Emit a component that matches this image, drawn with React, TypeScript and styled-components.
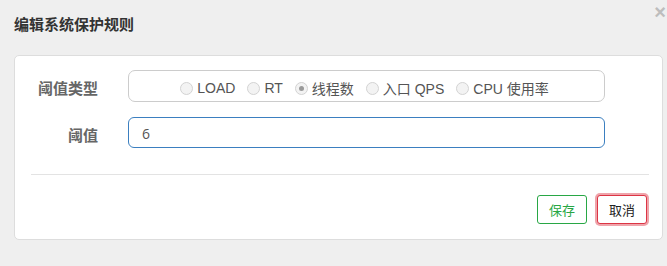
import styled, { createGlobalStyle } from "styled-components";

const GlobalStyle = createGlobalStyle`
  html, body {
    margin: 0;
    padding: 0;
    background: #efefef;
    font-family: "Liberation Sans", Arial, "Noto Sans CJK SC", sans-serif;
  }
  * { box-sizing: border-box; }
`;

const Modal = styled.div`
  position: relative;
  width: 667px;
  height: 266px;
  overflow: hidden;
  background: #efefef;
`;

const Header = styled.div`
  height: 55px;
  display: flex;
  align-items: center;
  padding: 0 0 8px 14px;
`;

const Title = styled.h3`
  margin: 0;
  font-size: 15px;
  font-weight: bold;
  color: #333;
  font-family: "Noto Sans CJK SC", sans-serif;
`;

const Close = styled.span`
  position: absolute;
  top: 1px;
  right: 1px;
  font-size: 20px;
  font-weight: bold;
  color: #bdbdbd;
  font-family: "Liberation Sans", sans-serif;
`;

const Card = styled.div`
  margin-left: 14px;
  width: 649px;
  background: #fff;
  border: 1px solid #ddd;
  border-radius: 5px;
  padding: 14px 15px 15px 15px;
`;

const Row = styled.div<{ $gap?: number }>`
  display: grid;
  grid-template-columns: 68px 477px;
  column-gap: 30px;
  align-items: center;
  margin-top: ${(p) => p.$gap ?? 0}px;
`;

const Label = styled.label`
  text-align: right;
  padding-top: 3px;
  font-size: 15px;
  font-weight: bold;
  color: #666;
  font-family: "Noto Sans CJK SC", sans-serif;
  white-space: nowrap;
`;

const RadioBox = styled.div`
  height: 32px;
  border: 1px solid #ccc;
  border-radius: 7px;
  display: flex;
  align-items: center;
  justify-content: center;
  gap: 12px;
  padding: 4px 4px 0 0;
`;

const Option = styled.span`
  display: flex;
  align-items: center;
  gap: 4px;
  font-size: 14px;
  color: #555;
  font-family: "Liberation Sans", "Noto Sans CJK SC", sans-serif;
`;

const Dot = styled.span<{ $on?: boolean }>`
  width: 13px;
  height: 13px;
  border-radius: 50%;
  border: 1px solid #d3d3d3;
  background: #f3f3f3;
  display: inline-flex;
  align-items: center;
  justify-content: center;
  &::after {
    content: "";
    width: 5px;
    height: 5px;
    border-radius: 50%;
    background: ${(p) => (p.$on ? "#9a9a9a" : "transparent")};
  }
`;

const Input = styled.div`
  height: 31px;
  border: 1px solid #3b7fc0;
  border-radius: 6px;
  display: flex;
  align-items: center;
  padding: 2px 0 0 13px;
  font-size: 14px;
  color: #555;
  font-family: "Open Sans", sans-serif;
`;

const Divider = styled.hr`
  margin: 26px 0 0 1px;
  border: 0;
  border-top: 1px solid #e3e3e3;
  width: 618px;
`;

const Footer = styled.div`
  display: flex;
  justify-content: flex-end;
  gap: 10px;
  margin-top: 20px;
`;

const Button = styled.button<{ $tone: "save" | "cancel" }>`
  width: 50px;
  height: 29px;
  background: #fff;
  border-radius: 3px;
  font-size: 13px;
  font-family: "Noto Sans CJK SC", sans-serif;
  padding: 0;
  border: 1px solid ${(p) => (p.$tone === "save" ? "#28a745" : "#dc3545")};
  color: ${(p) => (p.$tone === "save" ? "#28a745" : "#222")};
  box-shadow: ${(p) =>
    p.$tone === "cancel" ? "0 0 0 2px rgba(220, 53, 69, 0.45)" : "none"};
`;

const options = [
  { text: "LOAD" },
  { text: "RT" },
  { text: "线程数", on: true },
  { text: "入口 QPS" },
  { text: "CPU 使用率" },
];

export default function App() {
  return (
    <Modal>
      <GlobalStyle />
      <Header>
        <Title>编辑系统保护规则</Title>
      </Header>
      <Close>×</Close>
      <Card>
        <Row>
          <Label>阈值类型</Label>
          <RadioBox>
            {options.map((o) => (
              <Option key={o.text}>
                <Dot $on={o.on} />
                {o.text}
              </Option>
            ))}
          </RadioBox>
        </Row>
        <Row $gap={15}>
          <Label>阈值</Label>
          <Input>6</Input>
        </Row>
        <Divider />
        <Footer>
          <Button $tone="save">保存</Button>
          <Button $tone="cancel">取消</Button>
        </Footer>
      </Card>
    </Modal>
  );
}
